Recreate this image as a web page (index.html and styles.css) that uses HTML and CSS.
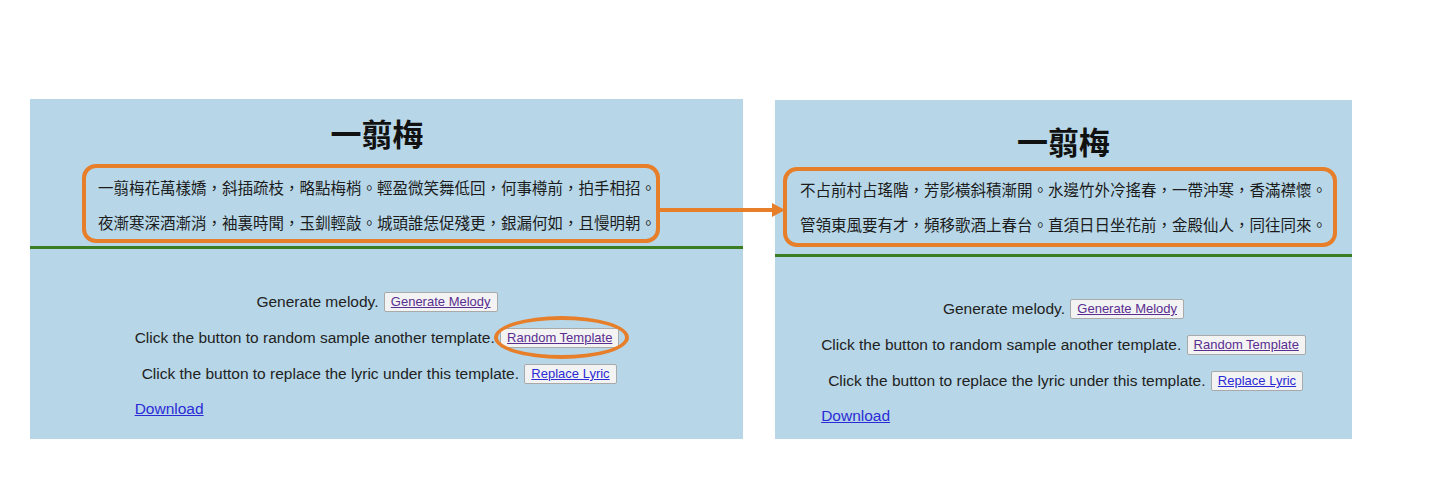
FILE: index.html
```html
<!DOCTYPE html>
<html lang="zh-Hant">
<head>
<meta charset="utf-8">
<title>一翦梅</title>
<link rel="stylesheet" href="styles.css">
</head>
<body>
<div class="stage">
  <section class="panel panel--left">
    <header class="panel-head">
      <h1 class="title">一翦梅</h1>
      <div class="lyrics">
        <p>一翦梅花萬樣嬌，斜插疏枝，略點梅梢。輕盈微笑舞低回，何事樽前，拍手相招。</p>
        <p>夜漸寒深酒漸消，袖裏時聞，玉釧輕敲。城頭誰恁促殘更，銀漏何如，且慢明朝。</p>
      </div>
    </header>
    <div class="controls">
      <div class="controls-inner">
        <p class="row">Generate melody. <button class="btn"><a href="#" class="btn-link btn-link--visited">Generate Melody</a></button></p>
        <p class="row">Click the button to random sample another template. <span class="circled"><button class="btn"><a href="#" class="btn-link btn-link--visited">Random Template</a></button></span></p>
        <p class="row">&nbsp;Click the button to replace the lyric under this template. <button class="btn"><a href="#" class="btn-link">Replace Lyric</a></button></p>
        <p class="row row--link"><a href="#" class="link">Download</a></p>
      </div>
    </div>
  </section>

  <section class="panel panel--right">
    <header class="panel-head">
      <h1 class="title">一翦梅</h1>
      <div class="lyrics">
        <p>不占前村占瑤階，芳影橫斜積漸開。水邊竹外冷搖春，一帶沖寒，香滿襟懷。</p>
        <p>管領東風要有才，頻移歌酒上春台。直須日日坐花前，金殿仙人，同往同來。</p>
      </div>
    </header>
    <div class="controls">
      <div class="controls-inner">
        <p class="row">Generate melody. <button class="btn"><a href="#" class="btn-link btn-link--visited">Generate Melody</a></button></p>
        <p class="row">Click the button to random sample another template. <button class="btn"><a href="#" class="btn-link btn-link--visited">Random Template</a></button></p>
        <p class="row">&nbsp;Click the button to replace the lyric under this template. <button class="btn"><a href="#" class="btn-link">Replace Lyric</a></button></p>
        <p class="row row--link"><a href="#" class="link">Download</a></p>
      </div>
    </div>
  </section>

  <svg class="arrow" width="130" height="20" viewBox="0 0 130 20" aria-hidden="true">
    <line x1="0" y1="10" x2="116" y2="10" stroke="#e67e2a" stroke-width="4"/>
    <polygon points="113,3 126,10 113,17" fill="#e67e2a"/>
  </svg>
</div>
</body>
</html>
```

FILE: styles.css
```css
html, body {
  margin: 0;
  padding: 0;
  background: #ffffff;
}

body {
  font-family: "Liberation Sans", "Noto Sans CJK TC", sans-serif;
  color: #222222;
}

.stage {
  position: relative;
  width: 1447px;
  height: 504px;
  box-sizing: border-box;
  padding: 99px 0 0 30px;
  display: flex;
  align-items: flex-start;
  gap: 32px;
}

.panel {
  background: #b7d7e8;
  box-sizing: border-box;
  display: flex;
  flex-direction: column;
}

.panel--left {
  width: 713px;
  height: 340px;
}

.panel--right {
  width: 577px;
  height: 339px;
  margin-top: 1px;
}

.panel-head {
  border-bottom: 3px solid #3b7d23;
}

.panel--left .panel-head {
  padding: 15px 19px 6px 0;
}

.panel--right .panel-head {
  padding: 22px 0 12px 0;
}

.title {
  margin: 0;
  font-family: "Noto Sans CJK TC", "Liberation Sans", sans-serif;
  font-weight: 700;
  font-size: 31px;
  line-height: 38px;
  text-align: center;
  color: #111111;
}

.lyrics {
  position: relative;
  width: fit-content;
  margin: 18px auto 0;
  font-family: "Noto Sans CJK TC", "Liberation Sans", sans-serif;
  font-size: 15.5px;
  line-height: 35px;
  color: #1c1c1c;
}

.panel--right .lyrics {
  margin-top: 12px;
  font-size: 15.5px;
}

.lyrics p {
  margin: 0;
  white-space: nowrap;
}

/* orange annotation outline drawn over the lyrics */
.lyrics::before {
  content: "";
  position: absolute;
  border: 4px solid #e67e2a;
  border-radius: 14px;
  pointer-events: none;
}

.panel--left .lyrics::before {
  left: -16px;
  right: -4px;
  top: -6px;
  bottom: -3px;
}

.panel--right .lyrics::before {
  left: -17px;
  right: -10px;
  top: -5px;
  bottom: -5px;
}

.controls {
  padding-top: 35px;
}

.panel--left .controls {
  padding-right: 19px;
}

.panel--right .controls {
  padding-top: 34px;
}

.controls-inner {
  width: fit-content;
  margin: 0 auto;
  text-align: center;
}

.row {
  margin: 0;
  font-size: 15.5px;
  line-height: 36px;
  white-space: nowrap;
}

.row--link {
  text-align: left;
  line-height: 34px;
}

.btn {
  font-family: "Liberation Sans", sans-serif;
  font-size: 13px;
  line-height: 15px;
  padding: 1px 6px 2px;
  margin-left: 1px;
  border: 1px solid #a9a9a9;
  border-radius: 2px;
  background: #f3f3f3;
  vertical-align: 1px;
  cursor: pointer;
}

.btn-link {
  color: #2b2bd6;
  text-decoration: underline;
}

.btn-link--visited {
  color: #5a2d91;
}

.link {
  color: #2b2bd6;
  text-decoration: underline;
}

.circled {
  position: relative;
  display: inline-block;
  line-height: 0;
}

/* orange annotation ellipse around the button */
.circled::after {
  content: "";
  position: absolute;
  left: -5px;
  right: -10px;
  top: -12px;
  bottom: -11px;
  border: 4px solid #e67e2a;
  border-radius: 50%;
  pointer-events: none;
}

.arrow {
  position: absolute;
  left: 659px;
  top: 200px;
}
```
